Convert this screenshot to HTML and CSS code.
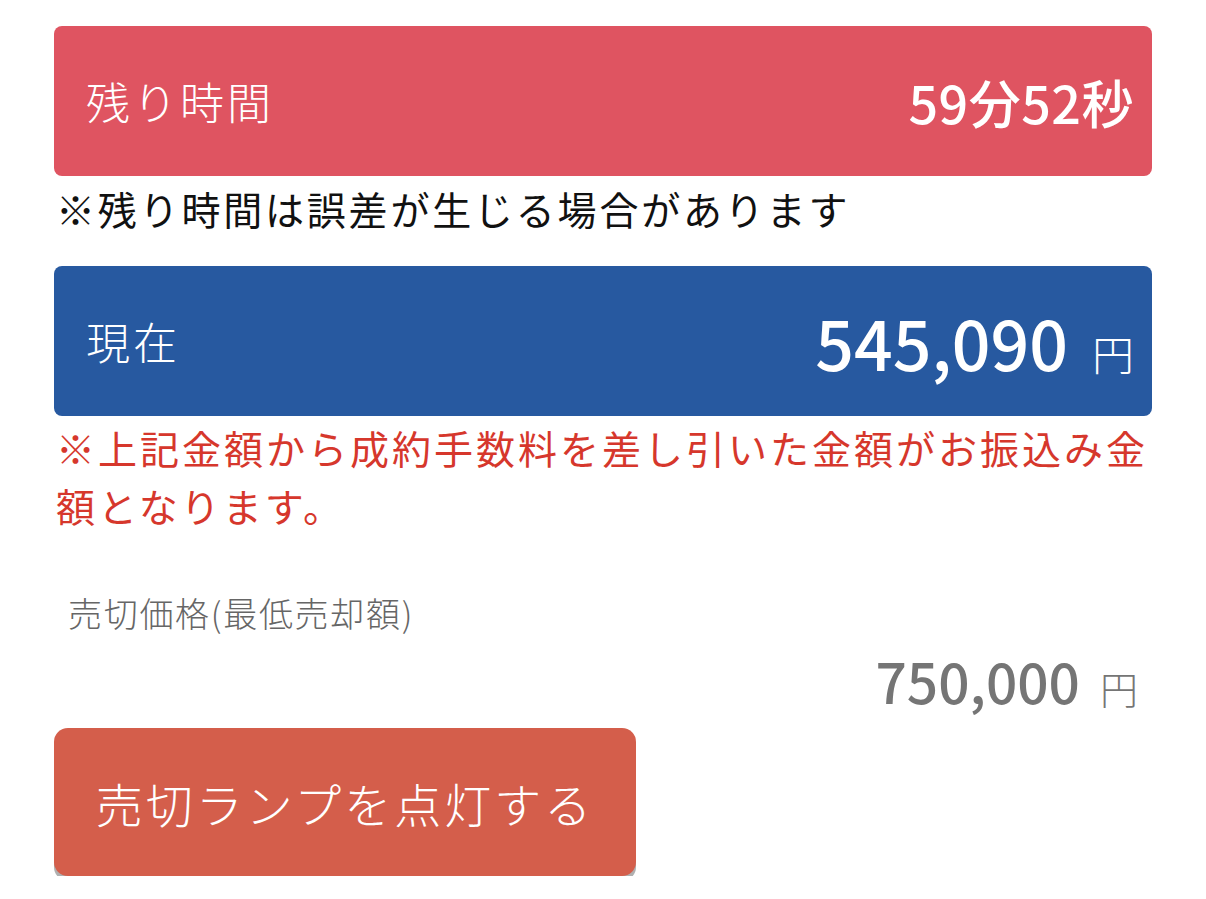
FILE: index.html
```html
<!DOCTYPE html>
<html lang="ja">
<head>
    <meta charset="utf-8">
    <title>売切ランプ</title>
    <link rel="stylesheet" href="styles.css">
</head>
<body>
    <div class="page">
        <div class="panel panel-time">
            <span class="panel-label">残り時間</span>
            <span class="panel-value time-value">59分52秒</span>
        </div>
        <p class="note">※残り時間は誤差が生じる場合があります</p>

        <div class="panel panel-price">
            <span class="panel-label">現在</span>
            <span class="panel-value"><span class="price-num">545,090</span><span class="yen">円</span></span>
        </div>
        <p class="warning">※上記金額から成約手数料を差し引いた金額がお振込み金額となります。</p>

        <div class="sell-label">売切価格(最低売却額)</div>
        <div class="sell-price"><span class="sell-num">750,000</span><span class="sell-yen">円</span></div>

        <button class="lamp-btn">売切ランプを点灯する</button>
    </div>
</body>
</html>
```

FILE: styles.css
```css
body {
    margin: 0;
    background: #fff;
    font-family: "Noto Sans CJK JP", "Noto Sans", sans-serif;
}
.page {
    padding: 26px 54px 0 54px;
}
.panel {
    display: flex;
    align-items: center;
    justify-content: space-between;
    height: 150px;
    padding: 0 18px 0 32px;
    border-radius: 8px;
    color: #fff;
    box-sizing: border-box;
}
.panel-time {
    background: #df5461;
}
.panel-price {
    background: #2759a0;
}
.panel-label {
    font-size: 44px;
    font-weight: 300;
    letter-spacing: 3px;
}
.time-value {
    font-size: 52px;
    font-weight: 500;
    letter-spacing: 0.5px;
}
.price-num {
    font-size: 68px;
    font-weight: 500;
}
.yen {
    font-size: 42px;
    font-weight: 300;
    margin-left: 24px;
}
.note {
    margin: 4px 0 30px 2px;
    font-size: 39px;
    font-weight: 400;
    color: #111;
    line-height: 56px;
    letter-spacing: 2.8px;
}
.warning {
    margin: 2px 0 0 2px;
    font-size: 39px;
    color: #d6372c;
    line-height: 58px;
    letter-spacing: 3px;
}
.sell-label {
    margin-top: 54px;
    padding-left: 14px;
    font-size: 34px;
    font-weight: 300;
    letter-spacing: 1.7px;
    color: #666;
}
.sell-price {
    display: flex;
    justify-content: flex-end;
    align-items: baseline;
    padding-right: 14px;
    color: #757575;
    margin-top: 3px;
}
.sell-num {
    font-size: 55px;
    font-weight: 500;
}
.sell-yen {
    font-size: 38px;
    font-weight: 300;
    margin-left: 20px;
}
.lamp-btn {
    margin-top: 8px;
    width: 582px;
    height: 148px;
    border: none;
    border-radius: 14px;
    background: #d45e4b;
    color: #fff;
    font-family: inherit;
    font-size: 47px;
    font-weight: 300;
    letter-spacing: 3px;
    box-shadow: 0 5px 0 #b0b0b0;
    cursor: pointer;
}
```
